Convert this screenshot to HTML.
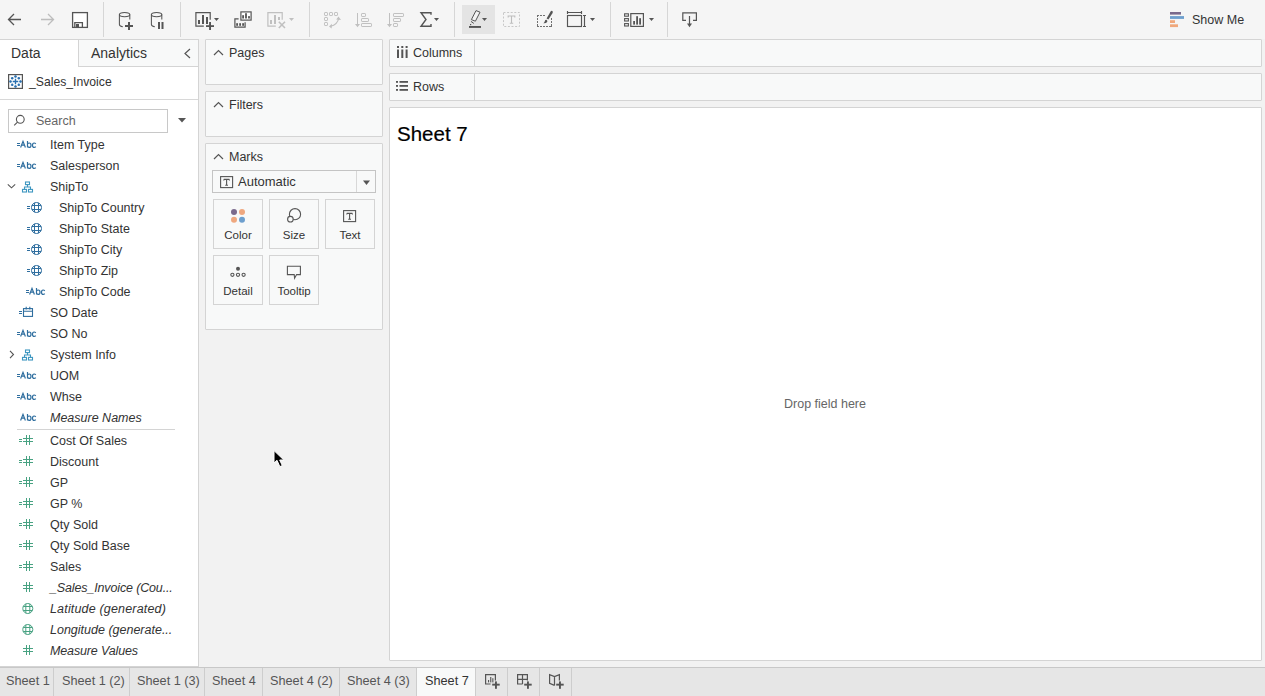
<!DOCTYPE html>
<html><head><meta charset="utf-8">
<style>
*{box-sizing:border-box;margin:0;padding:0}
html,body{width:1265px;height:696px;overflow:hidden;background:#f2f2f2;font-family:"Liberation Sans",sans-serif;color:#333}
.a{position:absolute}
svg{position:absolute;overflow:visible}
.t{position:absolute;white-space:nowrap;font-size:12.5px;line-height:14px}
.sep{position:absolute;top:2px;width:1px;height:35px;background:#d6d6d6}
.card{position:absolute;background:#f8f9f9;border:1px solid #d4d4d4;border-radius:1px}
.row{position:absolute;left:0;height:21px;width:198px}
.row .t{top:4px;left:50px}
.row.c .t{left:59px}
.row i{font-style:italic}
</style></head><body>

<!-- TOOLBAR -->
<div class="a" style="left:0;top:0;width:1265px;height:39px;background:#f5f5f5"></div>
<div class="sep" style="left:103px"></div>
<div class="sep" style="left:180px"></div>
<div class="sep" style="left:309px"></div>
<div class="sep" style="left:454px"></div>
<div class="sep" style="left:610px"></div>
<div class="sep" style="left:667px"></div>
<div class="a" style="left:462px;top:5px;width:33px;height:29px;background:#e4e4e4"></div>


<svg style="left:0;top:0" width="1265" height="39" viewBox="0 0 1265 39">
<g fill="none" stroke="#555" stroke-width="1.3">
 <!-- back -->
 <path d="M8.5 19.5H21M14 14L8.5 19.5L14 25"/>
 <!-- forward -->
 <path d="M41 19.5H53.5M48 14L53.5 19.5L48 25" stroke="#bdbdbd"/>
 <!-- save -->
 <rect x="72.6" y="12.6" width="14.8" height="14.8" fill="#fff"/>
 <path d="M74.8 27.4V22.6H82.4V27.4"/>
</g>
<rect x="76" y="24" width="3" height="3.6" fill="#555"/>
<!-- db add -->
<g fill="none" stroke="#555" stroke-width="1.05">
 <ellipse cx="124.6" cy="14.6" rx="5.2" ry="2.2"/>
 <path d="M119.4 14.6V24.6Q119.4 26.4 122.8 26.8M129.8 14.6V19.6"/>
 <path d="M119.4 14.6V24.6Q119.4 26.4 122.8 26.8M129.8 14.6V19.6" transform="translate(32 0)"/>
 <ellipse cx="156.6" cy="14.6" rx="5.2" ry="2.2"/>
</g>
<g fill="#555">
 <rect x="125" y="25" width="8" height="2"/><rect x="128" y="22" width="2" height="8"/>
 <rect x="158" y="22" width="2" height="7"/><rect x="161.5" y="22" width="2" height="7"/>
</g>
<!-- new worksheet -->
<g fill="none" stroke="#555" stroke-width="1.2">
 <path d="M203.8 26.2H195.9V12.7H210.2V19.8"/>
</g>
<g fill="#555">
 <rect x="198" y="20" width="2" height="4"/><rect x="202" y="15" width="2" height="9"/><rect x="206" y="17" width="2" height="7"/>
 <rect x="206" y="25.2" width="8" height="1.8"/><rect x="209.1" y="22" width="1.9" height="8"/>
 <path d="M214 18H219L216.5 21Z"/>
</g>
<!-- duplicate -->
<g fill="none" stroke="#555" stroke-width="1.2">
 <rect x="240.9" y="11.9" width="10.2" height="8.2" fill="#fff"/>
 <path d="M238.6 18.8H234.9V27.1H245.1V22.3"/>
</g>
<g fill="#555">
 <rect x="242.2" y="15.2" width="1.8" height="3.3"/><rect x="245.1" y="13.2" width="1.8" height="5.3"/><rect x="248.1" y="16.1" width="1.8" height="2.4"/>
 <rect x="236.2" y="23.2" width="1.8" height="2.6"/><rect x="239.2" y="23.2" width="1.8" height="2.6"/><rect x="242.2" y="23.2" width="1.8" height="2.6"/>
</g>
<!-- clear -->
<g fill="none" stroke="#c0c0c0" stroke-width="1.2">
 <path d="M275.8 26.2H267.9V12.7H282.2V19.8"/>
 <path d="M278.8 21.8L285 28M285 21.8L278.8 28" stroke-width="1.6"/>
</g>
<g fill="#c0c0c0">
 <rect x="270" y="20" width="2" height="4"/><rect x="274" y="15" width="2" height="9"/><rect x="278" y="17" width="2" height="3"/>
 <path d="M289 18H294L291.5 21Z"/>
</g>
<!-- swap -->
<g fill="none" stroke="#c0c0c0" stroke-width="1">
 <rect x="324.5" y="12.5" width="3" height="3" rx="0.6"/><rect x="329.5" y="12.5" width="3" height="3" rx="0.6"/><rect x="334.5" y="12.5" width="3" height="3" rx="0.6"/>
 <rect x="324.5" y="17.5" width="3" height="3" rx="0.6"/><rect x="324.5" y="22.5" width="3" height="3" rx="0.6"/>
 <path d="M330.5 26.3Q337.5 24.5 338.7 18.3" stroke-width="1.1"/>
</g>
<g fill="#c0c0c0">
 <path d="M338.5 16.5L341 20L336.2 19.5Z"/><path d="M329 26.5L332 23.8L331.6 28.5Z"/>
</g>
<!-- sort asc/desc -->
<g fill="none" stroke="#c0c0c0" stroke-width="1">
 <path d="M357.5 13V25"/>
 <rect x="361.5" y="13.5" width="4" height="3" rx="0.6"/><rect x="361.5" y="18.5" width="7" height="3" rx="0.6"/><rect x="361.5" y="23.5" width="10" height="3" rx="0.6"/>
 <path d="M389.5 13V25"/>
 <rect x="393.5" y="13.5" width="10" height="3" rx="0.6"/><rect x="393.5" y="18.5" width="7" height="3" rx="0.6"/><rect x="393.5" y="23.5" width="4" height="3" rx="0.6"/>
</g>
<g fill="#c0c0c0"><path d="M355 24H360L357.5 27.2Z"/><path d="M387 24H392L389.5 27.2Z"/></g>
<!-- sigma -->
<path d="M431 14.8V12.7H421L426 19.5L421 26.3H431V24" fill="none" stroke="#555" stroke-width="1.4"/>
<path d="M434 18H439L436.5 21Z" fill="#555"/>
<!-- highlight -->
<path d="M476 10.6L480 12.2L475.4 21.2L471.4 19.6Z" fill="#f2f2f2" stroke="#555" stroke-width="1"/>
<path d="M471 21.4L473.8 23.4" fill="none" stroke="#555" stroke-width="1"/>
<rect x="470" y="24" width="1.2" height="1.2" fill="#555"/>
<g fill="#555"><rect x="469" y="26" width="12" height="1.9"/><path d="M482 18H487L484.5 21Z"/></g>
<!-- text icon (disabled) -->
<g fill="none" stroke="#c8c8c8" stroke-width="1">
 <rect x="503.5" y="12.5" width="16" height="14" stroke-dasharray="2 1.6"/>
</g>
<path d="M508.2 17.6V16H514.8V17.6M511.5 16V23.2M509.8 23.2H513.2" fill="none" stroke="#bdbdbd" stroke-width="1.1"/>
<!-- brush -->
<g fill="#707070">
 <rect x="537" y="15" width="2" height="1"/><rect x="537" y="15" width="1" height="2"/><rect x="540" y="15" width="2" height="1"/><rect x="543" y="15" width="2" height="1"/>
 <rect x="537" y="18" width="1" height="2"/><rect x="537" y="21" width="1" height="2"/><rect x="537" y="24" width="1" height="3"/>
 <rect x="537" y="26" width="2" height="1"/><rect x="540" y="26" width="2" height="1"/><rect x="543" y="26" width="2" height="1"/><rect x="546" y="26" width="2" height="1"/><rect x="549" y="26" width="3" height="1"/>
 <rect x="551" y="18" width="1" height="2"/><rect x="551" y="21" width="1" height="2"/><rect x="551" y="24" width="1" height="3"/>
</g>
<path d="M552 10.8Q553.4 11.6 552.6 13L548.4 19.4L546.6 18.4L550.6 11.6Q551.2 10.6 552 10.8Z" fill="#555"/>
<path d="M546.4 19.8Q547.8 20.6 547.2 22Q546 23.4 543.4 23.2Q544.6 22.4 544.8 21.2Q545.2 19.6 546.4 19.8Z" fill="#555"/>
<!-- fit -->
<g fill="none" stroke="#555" stroke-width="1.15">
 <rect x="567.5" y="15.5" width="14" height="11"/>
 <path d="M567.5 12.5H581.5M567.5 11V14M581.5 11V14"/>
 <path d="M584.5 15.5V26.5M583 15.5H586M583 26.5H586"/>
</g>
<path d="M590 18H595L592.5 21Z" fill="#555"/>
<!-- presentation -->
<g fill="none" stroke="#555" stroke-width="1.1">
 <rect x="624.6" y="13.8" width="3.8" height="2.4"/><rect x="624.6" y="18.6" width="3.8" height="2.4"/><rect x="624.6" y="23.6" width="3.8" height="2.4"/>
 <rect x="630.8" y="13.6" width="12.6" height="12.8" stroke-width="1.2"/>
</g>
<g fill="#555">
 <rect x="633.2" y="21" width="1.8" height="3.6"/><rect x="636.2" y="16.2" width="1.8" height="8.4"/><rect x="639.2" y="18.2" width="1.8" height="6.4"/>
 <path d="M649 18H654L651.5 21Z"/>
</g>
<!-- share -->
<g fill="none" stroke="#555" stroke-width="1.2">
 <path d="M686 20.4H682.8V12.8H696.4V20.4H693M689.5 16V24.5"/>
</g>
<path d="M687 23.6H692L689.5 27.2Z" fill="#555"/>
<!-- show me -->
<rect x="1170" y="12" width="11" height="2.6" fill="#7a6a8c"/>
<rect x="1170" y="16.1" width="14" height="2.8" fill="#6d9fce"/>
<rect x="1170" y="20.2" width="5" height="2.8" fill="#f0a87c"/>
<rect x="1170" y="24.3" width="8" height="2.8" fill="#f0a87c"/>
</svg>
<div class="t" style="left:1192px;top:13px;color:#333">Show Me</div>

<!-- LEFT PANEL -->
<div class="a" style="left:0;top:39px;width:199px;height:628px;background:#fff;border-top:1px solid #d4d4d4;border-right:1px solid #d4d4d4;border-bottom:1px solid #d4d4d4"></div>
<div class="a" style="left:78px;top:39px;width:121px;height:28px;background:#f8f9f9;border-top:1px solid #d4d4d4;border-left:1px solid #d4d4d4;border-bottom:1px solid #d4d4d4;border-right:1px solid #d4d4d4"></div>
<div class="a" style="left:0;top:99px;width:198px;height:1px;background:#d8d8d8"></div>


<!--LP--><div class="t" style="left:11px;top:45px;font-size:14px;line-height:17px;color:#333">Data</div>
<div class="t" style="left:91px;top:45px;font-size:14px;line-height:17px;color:#333">Analytics</div>
<div class="t" style="left:29px;top:75px;font-size:12.2px;color:#333">_Sales_Invoice</div>
<div class="a" style="left:8px;top:109px;width:160px;height:24px;border:1px solid #c8c8c8;background:#fff"></div>
<div class="t" style="left:36px;top:114px;color:#666">Search</div>
<div class="row" style="top:134px"><div class="t">Item Type</div></div>
<div class="row" style="top:155px"><div class="t">Salesperson</div></div>
<div class="row" style="top:176px"><div class="t">ShipTo</div></div>
<div class="row c" style="top:197px"><div class="t">ShipTo Country</div></div>
<div class="row c" style="top:218px"><div class="t">ShipTo State</div></div>
<div class="row c" style="top:239px"><div class="t">ShipTo City</div></div>
<div class="row c" style="top:260px"><div class="t">ShipTo Zip</div></div>
<div class="row c" style="top:281px"><div class="t">ShipTo Code</div></div>
<div class="row" style="top:302px"><div class="t">SO Date</div></div>
<div class="row" style="top:323px"><div class="t">SO No</div></div>
<div class="row" style="top:344px"><div class="t">System Info</div></div>
<div class="row" style="top:365px"><div class="t">UOM</div></div>
<div class="row" style="top:386px"><div class="t">Whse</div></div>
<div class="row" style="top:407px"><div class="t"><i>Measure Names</i></div></div>
<div class="row" style="top:430px"><div class="t">Cost Of Sales</div></div>
<div class="row" style="top:451px"><div class="t">Discount</div></div>
<div class="row" style="top:472px"><div class="t">GP</div></div>
<div class="row" style="top:493px"><div class="t">GP %</div></div>
<div class="row" style="top:514px"><div class="t">Qty Sold</div></div>
<div class="row" style="top:535px"><div class="t">Qty Sold Base</div></div>
<div class="row" style="top:556px"><div class="t">Sales</div></div>
<div class="row" style="top:577px"><div class="t"><i style="letter-spacing:-0.14px">_Sales_Invoice (Cou...</i></div></div>
<div class="row" style="top:598px"><div class="t"><i style="letter-spacing:0.17px">Latitude (generated)</i></div></div>
<div class="row" style="top:619px"><div class="t"><i style="letter-spacing:0px">Longitude (generate...</i></div></div>
<div class="row" style="top:640px"><div class="t"><i style="letter-spacing:-0.14px">Measure Values</i></div></div>
<svg style="left:0;top:0" width="199" height="666" viewBox="0 0 199 666">
<rect x="8.6" y="74.6" width="13.8" height="13.8" fill="#fff" stroke="#555" stroke-width="1.2"/>
<g fill="none" stroke="#2a70b0" stroke-width="1.35"><path d="M12.7 81.5H18.3M15.5 78.7V84.3"/>
<path d="M14.2 76.5H16.8M15.5 75.2V77.8"/>
<path d="M14.2 86.5H16.8M15.5 85.2V87.8"/>
<path d="M9.2 81.5H11.8M10.5 80.2V82.8"/>
<path d="M19.2 81.5H21.8M20.5 80.2V82.8"/>
<path d="M10.899999999999999 78.2H13.5M12.2 76.9V79.5"/>
<path d="M17.5 78.2H20.1M18.8 76.9V79.5"/>
<path d="M10.899999999999999 84.8H13.5M12.2 83.5V86.1"/>
<path d="M17.5 84.8H20.1M18.8 83.5V86.1"/>
</g>
<g fill="none" stroke="#555" stroke-width="1.1"><circle cx="20.3" cy="119.3" r="3.9"/><path d="M17.5 122.1L14.2 125.4"/></g>
<path d="M178 118H186L182 122.5Z" fill="#555"/>
<path d="M190 49L185 53.5L190 58" fill="none" stroke="#555" stroke-width="1.2"/>
<rect x="17" y="143" width="3" height="1" fill="#2f6e9f"/><rect x="17" y="145" width="3" height="1" fill="#2f6e9f"/><path d="M20.6 147.5L23 141.4L25.4 147.5M21.5 145.2H24.5M27.5 141V147.5M27.5 144Q28.3 143 29.3 143Q31 143 31 145.2Q31 147.4 29.3 147.4Q28.3 147.4 27.5 146.5M35.8 143.8Q35.1 143 34.1 143Q32.5 143 32.5 145.2Q32.5 147.4 34.1 147.4Q35.1 147.4 35.8 146.6" fill="none" stroke="#2f6e9f" stroke-width="1.2"/>
<rect x="17" y="164" width="3" height="1" fill="#2f6e9f"/><rect x="17" y="166" width="3" height="1" fill="#2f6e9f"/><path d="M20.6 168.5L23 162.4L25.4 168.5M21.5 166.2H24.5M27.5 162V168.5M27.5 165Q28.3 164 29.3 164Q31 164 31 166.2Q31 168.4 29.3 168.4Q28.3 168.4 27.5 167.5M35.8 164.8Q35.1 164 34.1 164Q32.5 164 32.5 166.2Q32.5 168.4 34.1 168.4Q35.1 168.4 35.8 167.6" fill="none" stroke="#2f6e9f" stroke-width="1.2"/>
<g fill="none" stroke="#3d96c0" stroke-width="1.1"><rect x="25.5" y="182.0" width="4" height="2.6"/><rect x="22.5" y="189.4" width="4" height="2.6"/><rect x="28.5" y="189.4" width="4" height="2.6"/><path d="M27.5 184.6V187.0M24.5 189.4V187.0H30.5V189.4"/></g>
<path d="M7.8 184.3L11.5 187.8L15.2 184.3" fill="none" stroke="#555" stroke-width="1.1"/>
<rect x="27" y="206" width="3" height="1" fill="#2f6e9f"/><rect x="27" y="208" width="3" height="1" fill="#2f6e9f"/><g fill="none" stroke="#2f6e9f" stroke-width="1"><circle cx="36.5" cy="207.5" r="5.0"/><path d="M34.5 202.9V212.1M38.5 202.9V212.1M31.9 205.5H41.1M31.9 209.5H41.1"/></g>
<rect x="27" y="227" width="3" height="1" fill="#2f6e9f"/><rect x="27" y="229" width="3" height="1" fill="#2f6e9f"/><g fill="none" stroke="#2f6e9f" stroke-width="1"><circle cx="36.5" cy="228.5" r="5.0"/><path d="M34.5 223.9V233.1M38.5 223.9V233.1M31.9 226.5H41.1M31.9 230.5H41.1"/></g>
<rect x="27" y="248" width="3" height="1" fill="#2f6e9f"/><rect x="27" y="250" width="3" height="1" fill="#2f6e9f"/><g fill="none" stroke="#2f6e9f" stroke-width="1"><circle cx="36.5" cy="249.5" r="5.0"/><path d="M34.5 244.9V254.1M38.5 244.9V254.1M31.9 247.5H41.1M31.9 251.5H41.1"/></g>
<rect x="27" y="269" width="3" height="1" fill="#2f6e9f"/><rect x="27" y="271" width="3" height="1" fill="#2f6e9f"/><g fill="none" stroke="#2f6e9f" stroke-width="1"><circle cx="36.5" cy="270.5" r="5.0"/><path d="M34.5 265.9V275.1M38.5 265.9V275.1M31.9 268.5H41.1M31.9 272.5H41.1"/></g>
<rect x="26" y="290" width="3" height="1" fill="#2f6e9f"/><rect x="26" y="292" width="3" height="1" fill="#2f6e9f"/><path d="M29.6 294.5L32 288.4L34.4 294.5M30.5 292.2H33.5M36.5 288V294.5M36.5 291Q37.3 290 38.3 290Q40 290 40 292.2Q40 294.4 38.3 294.4Q37.3 294.4 36.5 293.5M44.8 290.8Q44.1 290 43.1 290Q41.5 290 41.5 292.2Q41.5 294.4 43.1 294.4Q44.1 294.4 44.8 293.6" fill="none" stroke="#2f6e9f" stroke-width="1.2"/>
<rect x="19" y="311" width="3" height="1" fill="#2f6e9f"/><rect x="19" y="313" width="3" height="1" fill="#2f6e9f"/>
<g fill="none" stroke="#2f6e9f" stroke-width="1.1"><rect x="23.5" y="308.6" width="9" height="7.8"/><path d="M23.5 311.2H32.5M26.2 306.8V309.5M29.8 306.8V309.5"/></g>
<rect x="17" y="332" width="3" height="1" fill="#2f6e9f"/><rect x="17" y="334" width="3" height="1" fill="#2f6e9f"/><path d="M20.6 336.5L23 330.4L25.4 336.5M21.5 334.2H24.5M27.5 330V336.5M27.5 333Q28.3 332 29.3 332Q31 332 31 334.2Q31 336.4 29.3 336.4Q28.3 336.4 27.5 335.5M35.8 332.8Q35.1 332 34.1 332Q32.5 332 32.5 334.2Q32.5 336.4 34.1 336.4Q35.1 336.4 35.8 335.6" fill="none" stroke="#2f6e9f" stroke-width="1.2"/>
<g fill="none" stroke="#3d96c0" stroke-width="1.1"><rect x="25.5" y="350.0" width="4" height="2.6"/><rect x="22.5" y="357.4" width="4" height="2.6"/><rect x="28.5" y="357.4" width="4" height="2.6"/><path d="M27.5 352.6V355.0M24.5 357.4V355.0H30.5V357.4"/></g>
<path d="M10 350.8L13.5 354.5L10 358.2" fill="none" stroke="#555" stroke-width="1.1"/>
<rect x="17" y="374" width="3" height="1" fill="#2f6e9f"/><rect x="17" y="376" width="3" height="1" fill="#2f6e9f"/><path d="M20.6 378.5L23 372.4L25.4 378.5M21.5 376.2H24.5M27.5 372V378.5M27.5 375Q28.3 374 29.3 374Q31 374 31 376.2Q31 378.4 29.3 378.4Q28.3 378.4 27.5 377.5M35.8 374.8Q35.1 374 34.1 374Q32.5 374 32.5 376.2Q32.5 378.4 34.1 378.4Q35.1 378.4 35.8 377.6" fill="none" stroke="#2f6e9f" stroke-width="1.2"/>
<rect x="17" y="395" width="3" height="1" fill="#2f6e9f"/><rect x="17" y="397" width="3" height="1" fill="#2f6e9f"/><path d="M20.6 399.5L23 393.4L25.4 399.5M21.5 397.2H24.5M27.5 393V399.5M27.5 396Q28.3 395 29.3 395Q31 395 31 397.2Q31 399.4 29.3 399.4Q28.3 399.4 27.5 398.5M35.8 395.8Q35.1 395 34.1 395Q32.5 395 32.5 397.2Q32.5 399.4 34.1 399.4Q35.1 399.4 35.8 398.6" fill="none" stroke="#2f6e9f" stroke-width="1.2"/>
<path d="M20.6 420.5L23 414.4L25.4 420.5M21.5 418.2H24.5M27.5 414V420.5M27.5 417Q28.3 416 29.3 416Q31 416 31 418.2Q31 420.4 29.3 420.4Q28.3 420.4 27.5 419.5M35.8 416.8Q35.1 416 34.1 416Q32.5 416 32.5 418.2Q32.5 420.4 34.1 420.4Q35.1 420.4 35.8 419.6" fill="none" stroke="#2f6e9f" stroke-width="1.2"/>
<rect x="17" y="429" width="158" height="1" fill="#d4d4d4"/>
<rect x="19" y="439" width="3" height="1" fill="#48a282"/><rect x="19" y="441" width="3" height="1" fill="#48a282"/><g fill="#48a282"><rect x="26" y="435" width="1" height="10"/><rect x="29" y="435" width="1" height="10"/><rect x="23" y="438" width="10" height="1"/><rect x="23" y="441" width="10" height="1"/></g>
<rect x="19" y="460" width="3" height="1" fill="#48a282"/><rect x="19" y="462" width="3" height="1" fill="#48a282"/><g fill="#48a282"><rect x="26" y="456" width="1" height="10"/><rect x="29" y="456" width="1" height="10"/><rect x="23" y="459" width="10" height="1"/><rect x="23" y="462" width="10" height="1"/></g>
<rect x="19" y="481" width="3" height="1" fill="#48a282"/><rect x="19" y="483" width="3" height="1" fill="#48a282"/><g fill="#48a282"><rect x="26" y="477" width="1" height="10"/><rect x="29" y="477" width="1" height="10"/><rect x="23" y="480" width="10" height="1"/><rect x="23" y="483" width="10" height="1"/></g>
<rect x="19" y="502" width="3" height="1" fill="#48a282"/><rect x="19" y="504" width="3" height="1" fill="#48a282"/><g fill="#48a282"><rect x="26" y="498" width="1" height="10"/><rect x="29" y="498" width="1" height="10"/><rect x="23" y="501" width="10" height="1"/><rect x="23" y="504" width="10" height="1"/></g>
<rect x="19" y="523" width="3" height="1" fill="#48a282"/><rect x="19" y="525" width="3" height="1" fill="#48a282"/><g fill="#48a282"><rect x="26" y="519" width="1" height="10"/><rect x="29" y="519" width="1" height="10"/><rect x="23" y="522" width="10" height="1"/><rect x="23" y="525" width="10" height="1"/></g>
<rect x="19" y="544" width="3" height="1" fill="#48a282"/><rect x="19" y="546" width="3" height="1" fill="#48a282"/><g fill="#48a282"><rect x="26" y="540" width="1" height="10"/><rect x="29" y="540" width="1" height="10"/><rect x="23" y="543" width="10" height="1"/><rect x="23" y="546" width="10" height="1"/></g>
<rect x="19" y="565" width="3" height="1" fill="#48a282"/><rect x="19" y="567" width="3" height="1" fill="#48a282"/><g fill="#48a282"><rect x="26" y="561" width="1" height="10"/><rect x="29" y="561" width="1" height="10"/><rect x="23" y="564" width="10" height="1"/><rect x="23" y="567" width="10" height="1"/></g>
<g fill="#48a282"><rect x="26" y="582" width="1" height="10"/><rect x="29" y="582" width="1" height="10"/><rect x="23" y="585" width="10" height="1"/><rect x="23" y="588" width="10" height="1"/></g>
<g fill="none" stroke="#48a282" stroke-width="1"><circle cx="27.8" cy="608.5" r="5.0"/><path d="M25.8 603.9V613.1M29.8 603.9V613.1M23.200000000000003 606.5H32.4M23.200000000000003 610.5H32.4"/></g>
<g fill="none" stroke="#48a282" stroke-width="1"><circle cx="27.8" cy="629.5" r="5.0"/><path d="M25.8 624.9V634.1M29.8 624.9V634.1M23.200000000000003 627.5H32.4M23.200000000000003 631.5H32.4"/></g>
<g fill="#48a282"><rect x="26" y="645" width="1" height="10"/><rect x="29" y="645" width="1" height="10"/><rect x="23" y="648" width="10" height="1"/><rect x="23" y="651" width="10" height="1"/></g>
</svg><!--/LP-->
<!-- SHELVES -->
<div class="card" style="left:205px;top:39px;width:178px;height:46px"></div>
<div class="card" style="left:205px;top:91px;width:178px;height:46px"></div>
<div class="card" style="left:205px;top:143px;width:178px;height:187px"></div>

<div class="card" style="left:389px;top:39px;width:873px;height:28px"></div>
<div class="a" style="left:474px;top:40px;width:1px;height:26px;background:#d4d4d4"></div>
<div class="card" style="left:389px;top:73px;width:873px;height:28px"></div>
<div class="a" style="left:474px;top:74px;width:1px;height:26px;background:#d4d4d4"></div>
<div class="card" style="left:389px;top:107px;width:873px;height:554px;background:#fff"></div>

<!-- TAB BAR -->
<div class="a" style="left:0;top:667px;width:1265px;height:29px;background:#e6e6e6;border-top:1px solid #c8c8c8"></div>


<svg style="left:199px;top:39px" width="1066" height="300" viewBox="199 39 1066 300">
<g fill="none" stroke="#555" stroke-width="1.2">
 <path d="M214 55L218.5 50.5L223 55"/>
 <path d="M214 107L218.5 102.5L223 107"/>
 <path d="M214 159L218.5 154.5L223 159"/>
</g>
<!-- automatic dropdown -->
<rect x="212.5" y="170.5" width="163" height="22" fill="#f8f9f9" stroke="#c4c4c4" stroke-width="1"/>
<rect x="356" y="171" width="1" height="21" fill="#d8d8d8"/>
<path d="M363 180.6H370L366.5 185Z" fill="#555"/>
<rect x="220.6" y="176.6" width="12" height="11" fill="none" stroke="#555" stroke-width="1.1"/>
<path d="M223.8 179.4H229.4M223.8 179.4V180.6M229.4 179.4V180.6M226.6 179.4V185.2M225.2 185.2H228" fill="none" stroke="#555" stroke-width="1.1"/>
<!-- marks buttons -->
<g fill="#f8f9f9" stroke="#d4d4d4" stroke-width="1">
 <rect x="213.5" y="199.5" width="49" height="49"/><rect x="269.5" y="199.5" width="49" height="49"/><rect x="325.5" y="199.5" width="49" height="49"/>
 <rect x="213.5" y="255.5" width="49" height="49"/><rect x="269.5" y="255.5" width="49" height="49"/>
</g>
<circle cx="234" cy="212" r="3" fill="#7a6a8c"/><circle cx="242" cy="212" r="3" fill="#efa87f"/>
<circle cx="234" cy="219.8" r="3" fill="#efa87f"/><circle cx="242" cy="219.8" r="3" fill="#6d9fce"/>
<g fill="none" stroke="#555" stroke-width="1.1">
 <circle cx="295" cy="214.2" r="5.6"/>
 <circle cx="290.4" cy="219.2" r="2.8" fill="#f8f9f9"/>
 <rect x="343.6" y="210.6" width="12" height="11"/>
 <path d="M346.8 213.4H352.4M346.8 213.4V214.6M352.4 213.4V214.6M349.6 213.4V219.2M348.2 219.2H351"/>
 <circle cx="232.4" cy="274.8" r="1.6"/><circle cx="238" cy="274.8" r="1.6"/><circle cx="243.6" cy="274.8" r="1.6"/>
 <path d="M287.4 266.2H300.4V274.6H296.6L294.6 278.2L294.2 274.6H287.4Z"/>
</g>
<circle cx="238" cy="268.8" r="2" fill="#555"/>
<!-- columns / rows icons -->
<g fill="#555">
 <rect x="397" y="46" width="2" height="2"/><rect x="401.3" y="46" width="2" height="2"/><rect x="405.6" y="46" width="2" height="2"/>
 <rect x="397" y="49.5" width="2" height="8.5"/><rect x="401.3" y="49.5" width="2" height="8.5"/><rect x="405.6" y="49.5" width="2" height="8.5"/>
 <rect x="396" y="81" width="2" height="1.8"/><rect x="396" y="85" width="2" height="1.8"/><rect x="396" y="89" width="2" height="1.8"/>
 <rect x="399.5" y="81" width="8.5" height="1.8"/><rect x="399.5" y="85" width="8.5" height="1.8"/><rect x="399.5" y="89" width="8.5" height="1.8"/>
</g>
</svg>
<div class="t" style="left:229px;top:46px">Pages</div>
<div class="t" style="left:229px;top:98px">Filters</div>
<div class="t" style="left:229px;top:150px">Marks</div>
<div class="t" style="left:238px;top:174px;font-size:13px;line-height:15px">Automatic</div>
<div class="t" style="left:213px;top:228px;width:50px;text-align:center;font-size:11.5px">Color</div>
<div class="t" style="left:269px;top:228px;width:50px;text-align:center;font-size:11.5px">Size</div>
<div class="t" style="left:325px;top:228px;width:50px;text-align:center;font-size:11.5px">Text</div>
<div class="t" style="left:213px;top:284px;width:50px;text-align:center;font-size:11.5px">Detail</div>
<div class="t" style="left:269px;top:284px;width:50px;text-align:center;font-size:11.5px">Tooltip</div>
<div class="t" style="left:413px;top:46px">Columns</div>
<div class="t" style="left:413px;top:80px">Rows</div>
<div class="t" style="left:397px;top:123px;font-size:20.5px;line-height:22px;color:#000;-webkit-text-stroke:0.2px #000">Sheet 7</div>
<div class="t" style="left:784px;top:397px;color:#666">Drop field here</div>

<div class="a" style="left:417px;top:668px;width:58px;height:28px;background:#f8f9f9"></div>
<svg style="left:0;top:666px" width="1265" height="30" viewBox="0 666 1265 30">
<g fill="#cdcdcd">
 <rect x="53" y="668" width="1" height="28"/><rect x="129" y="668" width="1" height="28"/><rect x="204" y="668" width="1" height="28"/>
 <rect x="262" y="668" width="1" height="28"/><rect x="339" y="668" width="1" height="28"/><rect x="416" y="668" width="1" height="28"/>
 <rect x="475" y="668" width="1" height="28"/><rect x="507" y="668" width="1" height="28"/><rect x="539" y="668" width="1" height="28"/><rect x="571" y="668" width="1" height="28"/>
</g>
<g fill="none" stroke="#555" stroke-width="1.2">
 <path d="M490.6 684H485.6V674.6H495.4V680.6"/>
 <path d="M522.6 684H517.6V674.6H527.4V680.6M517.6 679.4H527.4M522.5 674.6V684"/>
 <path d="M554.5 685.4L549.6 683.4V674.6L554.5 676.6L559.4 674.6V680.6M554.5 676.6V685.4"/>
</g>
<g fill="#555">
 <rect x="488" y="680" width="1.1" height="2.4"/><rect x="490.2" y="677" width="1.1" height="5.4"/><rect x="492.3" y="678.2" width="1.1" height="4.2"/>
 <rect x="492.2" y="683.7" width="7.5" height="1.9"/><rect x="495" y="681.4" width="1.9" height="7.4"/>
 <rect x="524.2" y="683.7" width="7.5" height="1.9"/><rect x="527" y="681.4" width="1.9" height="7.4"/>
 <rect x="556.2" y="683.7" width="7.5" height="1.9"/><rect x="559" y="681.4" width="1.9" height="7.4"/>
</g>
</svg>
<div class="t" style="left:6px;top:674px;font-size:12.7px;color:#555">Sheet 1</div>
<div class="t" style="left:62px;top:674px;font-size:12.7px;color:#555">Sheet 1 (2)</div>
<div class="t" style="left:137px;top:674px;font-size:12.7px;color:#555">Sheet 1 (3)</div>
<div class="t" style="left:212px;top:674px;font-size:12.7px;color:#555">Sheet 4</div>
<div class="t" style="left:270px;top:674px;font-size:12.7px;color:#555">Sheet 4 (2)</div>
<div class="t" style="left:347px;top:674px;font-size:12.7px;color:#555">Sheet 4 (3)</div>
<div class="t" style="left:425px;top:674px;font-size:12.7px;color:#333">Sheet 7</div>
<svg style="left:270px;top:448px" width="16" height="22" viewBox="270 448 16 22">
<path d="M274 450.6V463L277 460.3L279.8 466.6L282.3 465.6L279.7 460H283.8Z" fill="#000" stroke="#fff" stroke-width="1" stroke-linejoin="round"/>
</svg>
</body></html>
